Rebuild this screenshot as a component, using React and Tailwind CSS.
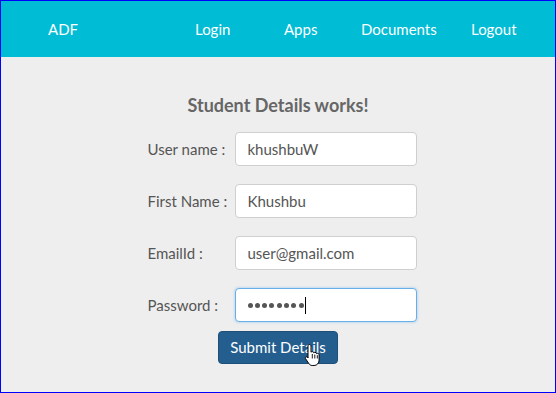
import React from "react";

function HandCursor() {
  return (
    <svg width="18" height="26" viewBox="0 0 18 24" className="absolute left-[86px] top-[11px]">
      <path
        d="M5.5 1.5c.8 0 1.5.7 1.5 1.5v6.2c.3-.4.8-.6 1.3-.6.8 0 1.4.5 1.5 1.2.3-.3.7-.5 1.2-.5.8 0 1.4.6 1.5 1.3.3-.2.6-.3 1-.3.9 0 1.6.7 1.6 1.6v5.2c0 2.8-1.9 5.4-5 5.4H8.2c-1.5 0-2.6-.8-3.4-2L1.6 15.8c-.4-.6-.3-1.4.3-1.8.6-.4 1.4-.3 1.8.2L4 15V3c0-.8.7-1.5 1.5-1.5z"
        fill="#fff"
        stroke="#000"
        strokeWidth="1"
      />
      <path d="M8.3 11v4.5M10.8 11.5v4M13.3 12.2v3.3" stroke="#000" strokeWidth="0.9" />
    </svg>
  );
}

function Row({ label, children }) {
  return (
    <div className="flex items-center h-[34px]">
      <label className="w-[87px] text-[15px] text-[#555] leading-none">{label}</label>
      {children}
    </div>
  );
}

export default function App() {
  const inputCls =
    "w-[182px] h-[34px] rounded-[4px] bg-white border border-[#cfcfcf] px-[12px] text-[15px] text-[#555] outline-none";
  return (
    <div
      className="w-[556px] h-[393px] border border-[#0000ff] bg-[#eeeeee] flex flex-col"
      style={{ fontFamily: "Lato, 'Open Sans', sans-serif" }}
    >
      <div className="h-[56px] bg-[#00bcd4] flex items-center text-white text-[15px] shrink-0">
        <span className="ml-[47px] w-[147px]">ADF</span>
        <span className="w-[89px]">Login</span>
        <span className="w-[77px]">Apps</span>
        <span className="w-[110px]">Documents</span>
        <span>Logout</span>
      </div>
      <div className="flex flex-col items-center">
        <h1 className="mt-[37px] text-[18px] font-bold text-[#666] leading-[22px]">Student Details works!</h1>
        <div className="ml-[8px] mt-[16px] flex flex-col gap-[18px]">
          <Row label="User name :">
            <div className={inputCls + " flex items-center"}>khushbuW</div>
          </Row>
          <Row label="First Name :">
            <div className={inputCls + " flex items-center"}>Khushbu</div>
          </Row>
          <Row label="EmailId :">
            <div className={inputCls + " flex items-center"}>user@gmail.com</div>
          </Row>
          <Row label="Password :">
            <div className="w-[182px] h-[34px] rounded-[4px] bg-white border border-[#66afe9] shadow-[0_0_3px_rgba(102,175,233,0.6)] px-[12px] flex items-center">
              <div className="flex gap-[2.3px]">
                {[0, 1, 2, 3, 4, 5, 6, 7].map((i) => (
                  <span key={i} className="w-[5px] h-[5px] rounded-full bg-[#555]" />
                ))}
              </div>
              <span className="ml-[1px] w-px h-[17px] bg-black" />
            </div>
          </Row>
        </div>
        <div className="relative mt-[9px]">
          <button className="w-[120px] h-[33px] rounded-[4px] bg-[#245e8f] border border-[#1d4f79] text-white text-[15px]">
            Submit Details
          </button>
          <HandCursor />
        </div>
      </div>
    </div>
  );
}
